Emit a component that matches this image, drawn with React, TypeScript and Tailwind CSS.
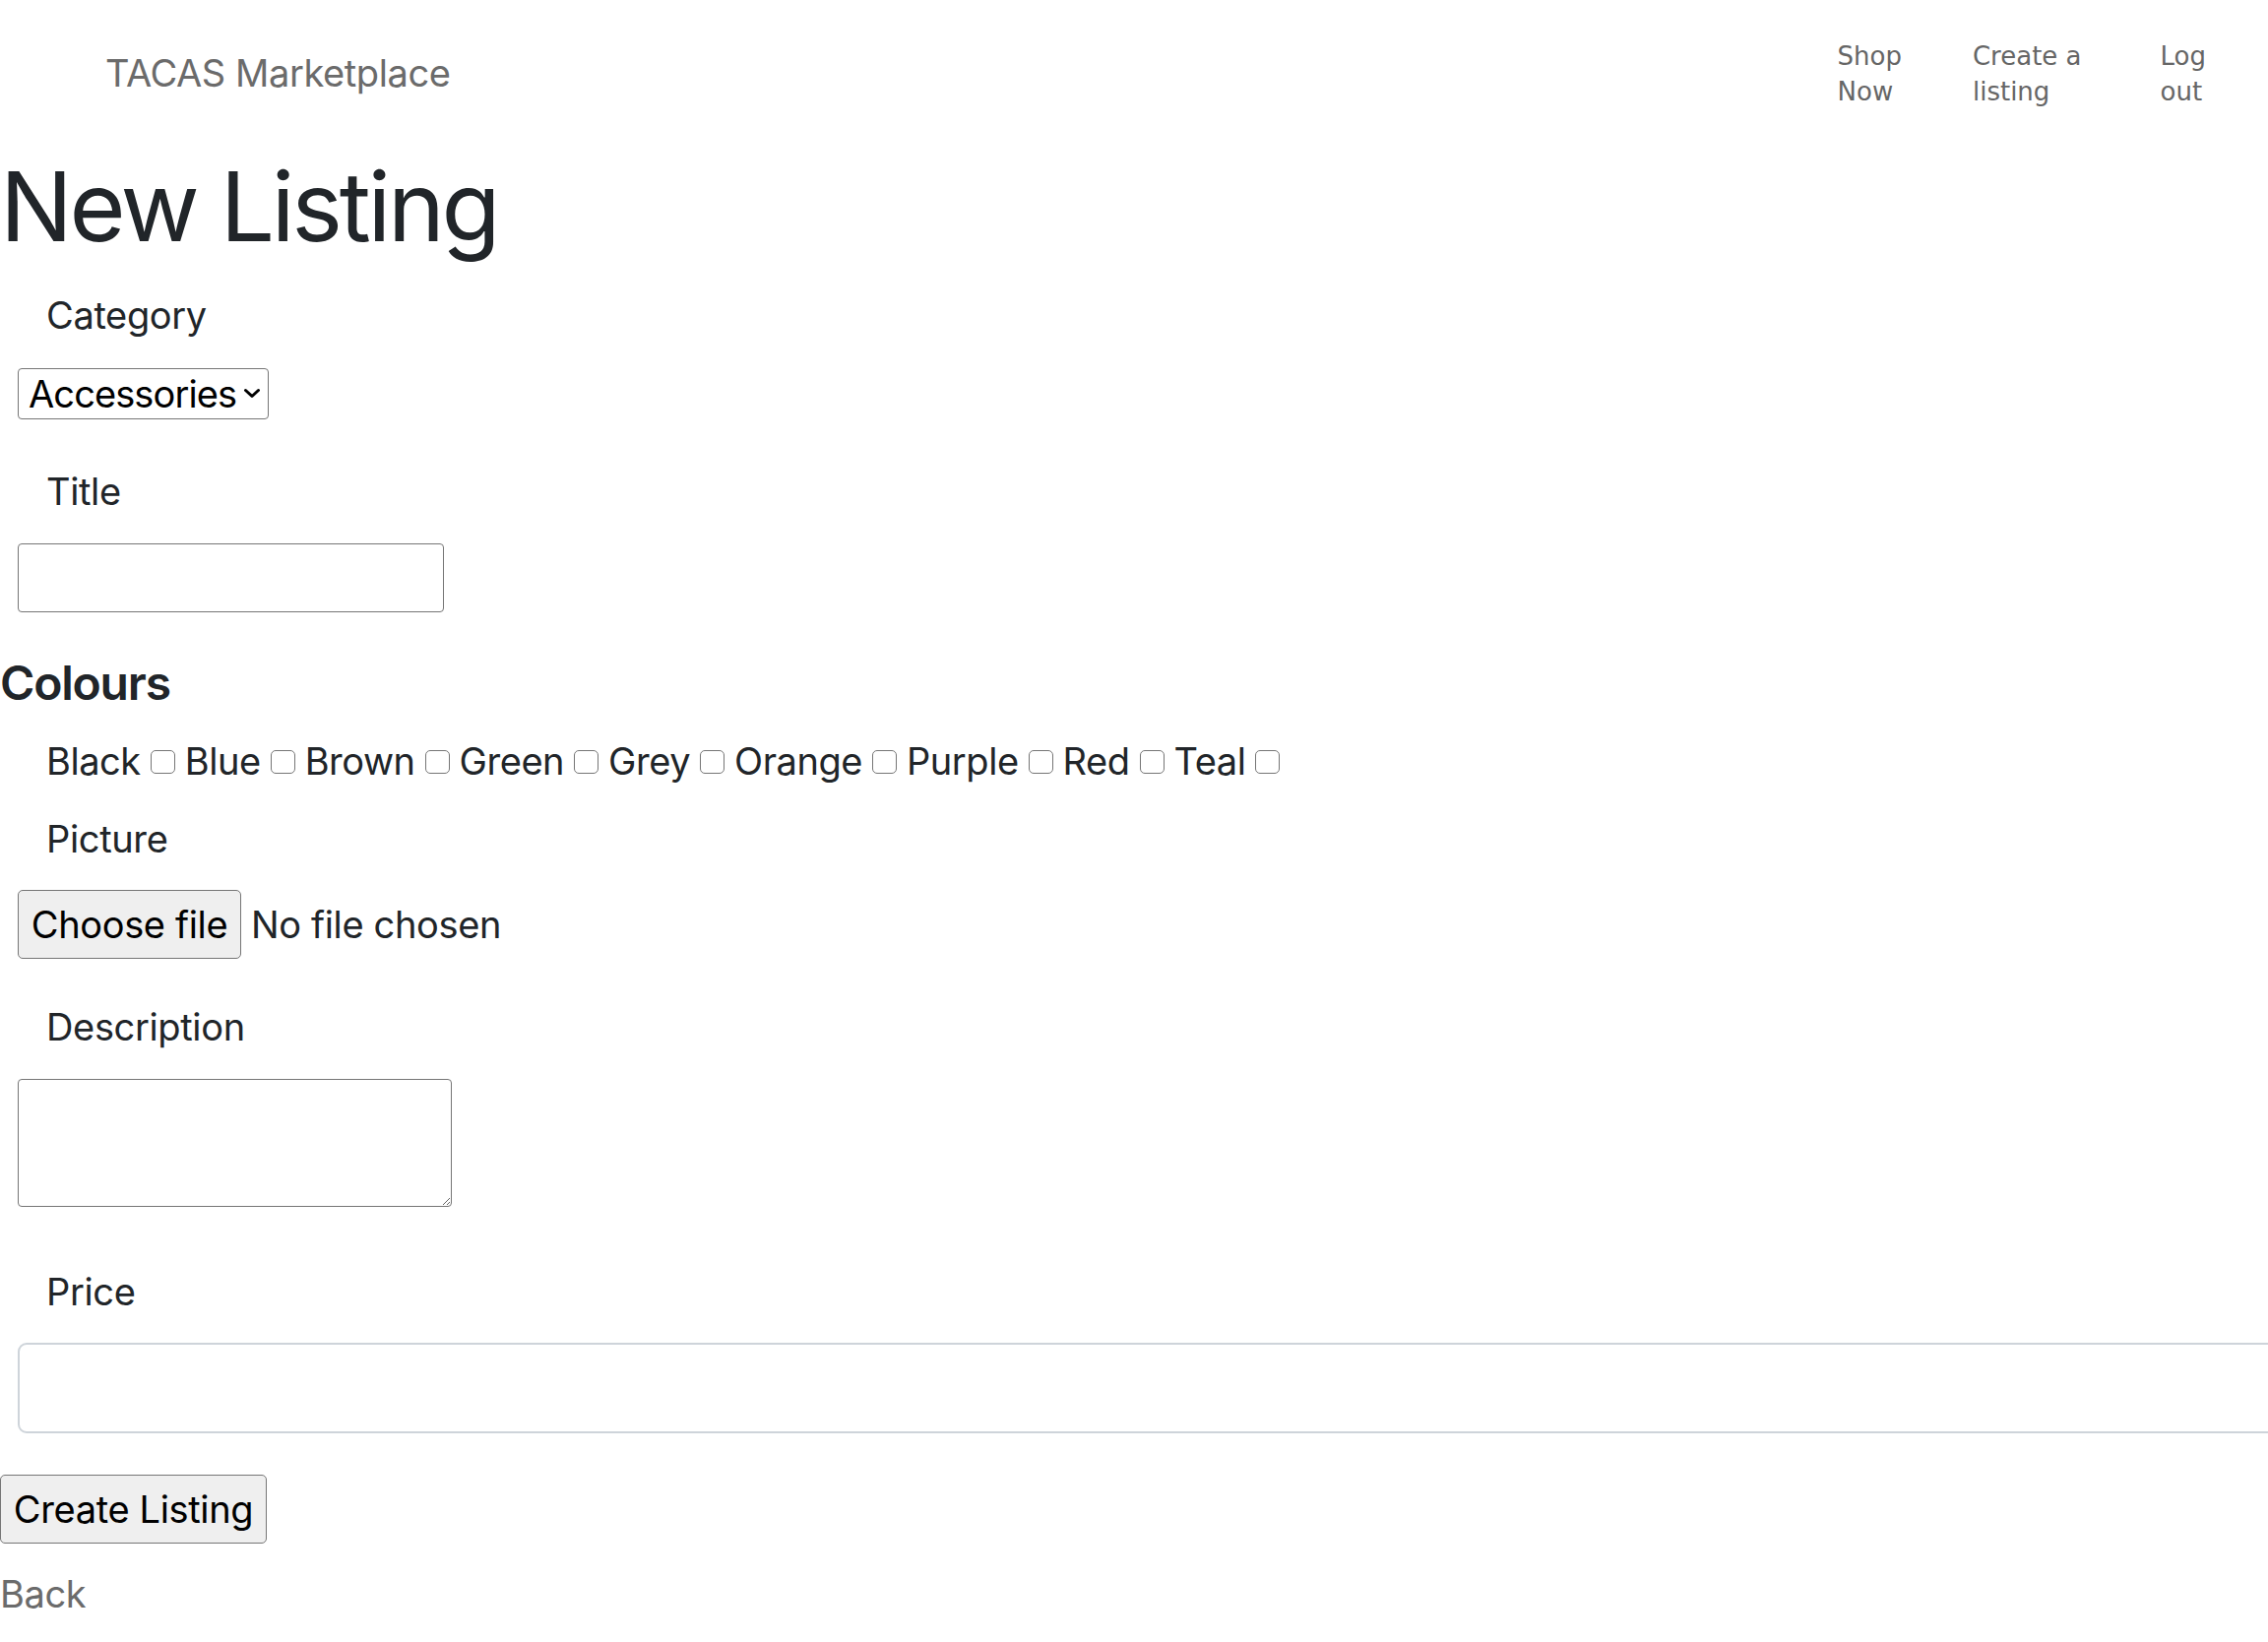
const COLOURS = ["Black", "Blue", "Brown", "Green", "Grey", "Orange", "Purple", "Red", "Teal"];

function Label({ children, className = "" }: { children: React.ReactNode; className?: string }) {
  return (
    <label className={`block pl-[47px] text-[38px] leading-[57px] text-[#212529] ${className}`}>{children}</label>
  );
}

export default function App() {
  return (
    <div className="min-h-screen overflow-hidden bg-white font-['Inter',sans-serif] tracking-[-0.35px] text-[#212529]">
      <nav className="flex h-[150px] items-center justify-between">
        <a href="#" className="ml-[107px] -mt-[3px] text-[38px] leading-[60px] tracking-[-0.4px] text-[#6b6b6b]">
          TACAS Marketplace
        </a>
        <ul className="mr-[63px] flex font-['DejaVu_Sans',sans-serif] text-[26px] leading-[36px] tracking-normal text-[#666666]">
          <li>
            <a href="#">Shop<br />Now</a>
          </li>
          <li className="ml-[72px]">
            <a href="#">Create a<br />listing</a>
          </li>
          <li className="ml-[80px]">
            <a href="#">Log<br />out</a>
          </li>
        </ul>
      </nav>

      <h1 className="text-[98px] font-normal leading-[119px] tracking-[-3.3px]">New Listing</h1>

      <form className="mt-[23px]">
        <Label>Category</Label>
        <div className="relative ml-[18px] mt-[25px] inline-block">
          <select className="h-[52px] w-[255px] appearance-none rounded-[4px] border-[1.5px] border-[#767676] bg-white pl-[10px] text-[38px] leading-[48px] tracking-[-0.9px] text-black">
            <option>Accessories</option>
          </select>
          <svg
            className="pointer-events-none absolute right-[8px] top-[20px]"
            width="18"
            height="11"
            viewBox="0 0 18 11"
            fill="none"
          >
            <polyline points="2.5,2.5 9,8.5 15.5,2.5" stroke="#000" strokeWidth="3" strokeLinecap="round" strokeLinejoin="round" />
          </svg>
        </div>

        <Label className="mt-[45px]">Title</Label>
        <input
          type="text"
          className="ml-[18px] mt-[24px] block h-[70px] w-[433px] rounded-[4px] border-[1.5px] border-[#767676] bg-white"
        />

        <h5 className="mt-[43px] text-[48px] font-semibold leading-[58px] tracking-[-1.2px]">Colours</h5>

        <div className="mt-[22px] flex items-center pl-[47px] text-[38px] leading-[57px] tracking-[-0.45px]">
          {COLOURS.map((c) => (
            <span key={c} className="flex items-center">
              <label>{c}</label>
              <input
                type="checkbox"
                className="ml-[10px] mr-[10px] h-[24px] w-[25px] appearance-none rounded-[5px] border-[1.5px] border-[#767676] bg-white"
              />
            </span>
          ))}
        </div>

        <Label className="mt-[22px]">Picture</Label>
        <div className="ml-[18px] mt-[23px] flex items-center text-[38px]">
          <button
            type="button"
            className="h-[70px] w-[227px] rounded-[5px] border-[1.5px] border-[#767676] bg-[#efefef] text-black"
          >
            Choose file
          </button>
          <span className="ml-[10px] text-[#212529]">No file chosen</span>
        </div>

        <Label className="mt-[41px]">Description</Label>
        <textarea className="ml-[18px] mt-[24px] block h-[130px] w-[441px] rounded-[4px] border-[1.5px] border-[#767676] bg-white" />

        <Label className="mt-[58px]">Price</Label>
        <input
          type="number"
          className="ml-[18px] mt-[23px] block h-[92px] w-[2400px] rounded-[9px] border-[2px] border-[#ced4da] bg-white"
        />

        <button
          type="submit"
          className="mt-[42px] block h-[70px] w-[271px] rounded-[5px] border-[1.5px] border-[#767676] bg-[#efefef] text-[38px] text-black"
        >
          Create Listing
        </button>
      </form>

      <a href="#" className="mt-[23px] block text-[38px] leading-[57px] text-[#6b6b6b]">
        Back
      </a>
    </div>
  );
}
